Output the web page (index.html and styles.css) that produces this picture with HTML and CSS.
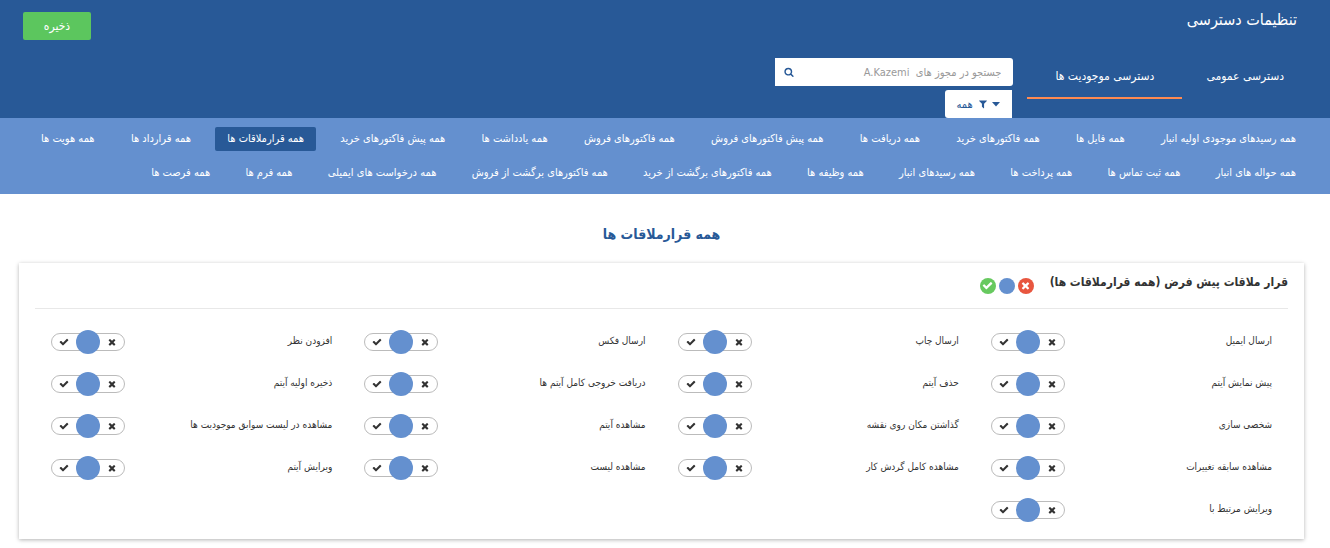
FILE: index.html
```html
<!DOCTYPE html>
<html lang="fa" dir="rtl">
<head>
<meta charset="utf-8">
<title>تنظیمات دسترسی</title>
<link rel="stylesheet" href="styles.css">
</head>
<body>
<svg class="sprite" aria-hidden="true">
  <symbol id="check" viewBox="0 0 1792 1792"><path d="M1671 566q0 40-28 68l-724 724-136 136q-28 28-68 28t-68-28l-136-136-362-362q-28-28-28-68t28-68l136-136q28-28 68-28t68 28l294 295 656-657q28-28 68-28t68 28l136 136q28 28 28 68z"/></symbol>
  <symbol id="times" viewBox="0 0 1792 1792"><path d="M1490 1322q0 40-28 68l-136 136q-28 28-68 28t-68-28l-294-294-294 294q-28 28-68 28t-68-28l-136-136q-28-28-28-68t28-68l294-294-294-294q-28-28-28-68t28-68l136-136q28-28 68-28t68 28l294 294 294-294q28-28 68-28t68 28l136 136q28 28 28 68t-28 68l-294 294 294 294q28 28 28 68z"/></symbol>
  <symbol id="search" viewBox="0 0 1792 1792"><path d="M1216 832q0-185-131.500-316.500t-316.500-131.500-316.500 131.500-131.500 316.500 131.500 316.500 316.500 131.500 316.500-131.500 131.500-316.500zm512 832q0 52-38 90t-90 38q-54 0-90-38l-343-342q-179 124-399 124-143 0-273.500-55.500t-225-150-150-225-55.500-273.500 55.500-273.500 150-225 225-150 273.500-55.500 273.500 55.500 225 150 150 225 55.500 273.500q0 220-124 399l343 343q37 37 37 90z"/></symbol>
  <symbol id="filter" viewBox="0 0 1792 1792"><path d="M1595 295q17 41-14 70l-493 493v742q0 42-39 59-13 5-25 5-27 0-45-19l-256-256q-19-19-19-45v-486l-493-493q-31-29-14-70 17-39 59-39h1280q42 0 59 39z"/></symbol>
  <symbol id="caret" viewBox="0 0 8 5"><path d="M0 0h8L4 4.500z"/></symbol>
</svg>

<header class="top">
  <div class="title-row">
    <h1 class="page-title">تنظیمات دسترسی</h1>
    <button class="save" type="button">ذخیره</button>
  </div>
  <div class="tools-row">
    <nav class="tabs">
      <a class="tab" href="#general">دسترسی عمومی</a>
      <a class="tab tab-active" href="#entities">دسترسی موجودیت ها</a>
    </nav>
    <div class="tools">
      <div class="search">
        <input class="search-input" type="text" aria-label="جستجو" placeholder="جستجو در مجوز های  A.Kazemi">
        <button class="search-button" type="button" aria-label="جستجو"><svg class="icon-search"><use href="#search"/></svg></button>
      </div>
      <div class="filter">
        <svg class="icon-caret"><use href="#caret"/></svg>
        <svg class="icon-filter"><use href="#filter"/></svg>
        <select class="filter-select" aria-label="فیلتر"><option>همه</option></select>
      </div>
    </div>
  </div>
</header>

<nav class="entities">
  <div class="entity-row">
    <a class="entity" href="#e1">همه رسیدهای موجودی اولیه انبار</a>
    <a class="entity" href="#e2">همه فایل ها</a>
    <a class="entity" href="#e3">همه فاکتورهای خرید</a>
    <a class="entity" href="#e4">همه دریافت ها</a>
    <a class="entity" href="#e5">همه پیش فاکتورهای فروش</a>
    <a class="entity" href="#e6">همه فاکتورهای فروش</a>
    <a class="entity" href="#e7">همه یادداشت ها</a>
    <a class="entity" href="#e8">همه پیش فاکتورهای خرید</a>
    <a class="entity entity-active" href="#e9">همه قرارملاقات ها</a>
    <a class="entity" href="#e10">همه قرارداد ها</a>
    <a class="entity" href="#e11">همه هویت ها</a>
  </div>
  <div class="entity-row entity-row-short">
    <a class="entity" href="#e12">همه حواله های انبار</a>
    <a class="entity" href="#e13">همه ثبت تماس ها</a>
    <a class="entity" href="#e14">همه پرداخت ها</a>
    <a class="entity" href="#e15">همه رسیدهای انبار</a>
    <a class="entity" href="#e16">همه وظیفه ها</a>
    <a class="entity" href="#e17">همه فاکتورهای برگشت از خرید</a>
    <a class="entity" href="#e18">همه فاکتورهای برگشت از فروش</a>
    <a class="entity" href="#e19">همه درخواست های ایمیلی</a>
    <a class="entity" href="#e20">همه فرم ها</a>
    <a class="entity" href="#e21">همه فرصت ها</a>
  </div>
</nav>

<main class="content">
  <h2 class="section-title">همه قرارملاقات ها</h2>
  <section class="card">
    <div class="card-head">
      <h3 class="card-title">قرار ملاقات پیش فرض (همه قرارملاقات ها)</h3>
      <div class="bulk">
        <button class="dot dot-deny" type="button" aria-label="عدم دسترسی"><svg class="icon-dot"><use href="#times"/></svg></button>
        <button class="dot" type="button" aria-label="پیش فرض"></button>
        <button class="dot dot-allow" type="button" aria-label="دسترسی"><svg class="icon-dot"><use href="#check"/></svg></button>
      </div>
    </div>
    <div class="permissions" id="permissions"></div>
  </section>
</main>
<script src="script.js"></script>
</body>
</html>
```
FILE: styles.css
```css
* { box-sizing: border-box; }

body {
  margin: 0;
  background: #fff;
  color: #333;
  font-family: "DejaVu Sans Condensed", "DejaVu Sans", sans-serif;
  font-size: 10px;
}

button, input, select { font-family: inherit; margin: 0; border: 0; }
a { color: inherit; text-decoration: none; }
h1, h2, h3 { margin: 0; }
svg { display: block; fill: currentColor; }
.sprite { display: none; }

.top { background: #285997; color: #fff; }

.title-row {
  display: flex;
  justify-content: space-between;
  align-items: flex-start;
  height: 56px;
  padding: 12px 33px 0 23px;
}
.page-title { font-size: 16px; line-height: 16px; font-weight: 400; }
.save {
  width: 68px;
  height: 28px;
  border-radius: 2px;
  background: #5cc65e;
  color: #fff;
  font-size: 12px;
}

.tools-row { display: flex; align-items: flex-start; gap: 14px; padding-right: 22px; }
.tabs { display: flex; }
.tab {
  padding: 0 24px;
  border-bottom: 2px solid transparent;
  font-size: 12px;
  line-height: 41px;
  text-align: center;
  white-space: nowrap;
}
.tab-active { min-width: 155px; border-color: #ff8a50; }

.tools { display: flex; flex-direction: column; gap: 4px; padding-top: 2px; }
.search {
  display: flex;
  width: 238px;
  height: 28px;
  overflow: hidden;
  border-radius: 0 3px 3px 0;
  background: #fff;
}
.search-input { flex: 1; min-width: 0; padding: 0 12px 0 0; background: none; font-size: 11px; }
.search-input::placeholder { color: #999; white-space: pre; }
.search-button { width: 28px; padding: 0 9px; background: none; color: #285997; }
.icon-search { width: 10px; height: 10px; }
.filter {
  display: flex;
  align-items: center;
  gap: 4px;
  width: 67px;
  height: 28px;
  margin-right: 1px;
  padding: 0 12px 0 11px;
  border-radius: 3px 0 0 3px;
  background: #fff;
  color: #285997;
}
.icon-caret { width: 8px; height: 5px; flex: none; }
.icon-filter { width: 10px; height: 10px; flex: none; }
.filter-select {
  flex: 1;
  min-width: 0;
  padding: 0;
  appearance: none;
  background: none;
  color: #285997;
  font-size: 11px;
  text-align: left;
  text-align-last: left;
}

.entities {
  display: flex;
  flex-direction: column;
  gap: 10px;
  padding: 9px 22px 9px 29px;
  background: #6490cf;
  color: #fff;
}
.entity-row { display: flex; justify-content: space-between; }
.entity-row-short { padding-left: 110px; }
.entity { padding: 0 12px; border-radius: 2px; font-size: 11px; line-height: 24px; white-space: nowrap; }
.entity-active { background: #285997; }

.content { padding: 28px 26px 9px 19px; }
.section-title {
  padding-bottom: 17px;
  color: #285997;
  font-size: 14px;
  line-height: 24px;
  text-align: center;
}
.card {
  padding: 0 16px 8px;
  background: #fff;
  box-shadow: 0 1px 4px rgba(0, 0, 0, .3);
}
.card-head {
  display: flex;
  align-items: center;
  gap: 16px;
  height: 46px;
  border-bottom: 1px solid #e8e8e8;
}
.card-title { padding-bottom: 8px; font-size: 12px; line-height: 20px; }
.bulk { display: flex; gap: 3px; }
.dot {
  display: grid;
  place-items: center;
  width: 16px;
  height: 16px;
  padding: 0;
  border-radius: 50%;
  background: #6490cf;
  color: #fff;
}
.dot-deny { background: #e8563f; }
.dot-allow { background: #67c95f; }
.icon-dot { width: 11px; height: 11px; }

.permissions { display: grid; grid-template-columns: repeat(4, 1fr); padding-top: 12px; }
.permission {
  display: flex;
  justify-content: space-between;
  align-items: center;
  height: 42px;
  padding: 0 16px;
}
.permission-label { padding-bottom: 4px; font-size: 10px; white-space: nowrap; }
.switch {
  display: grid;
  grid-template-columns: 24px 1fr 24px;
  grid-template-rows: 16px;
  place-items: center;
  width: 74px;
  height: 18px;
  border: 1px solid #bbb;
  border-radius: 9px;
}
.switch-icon { width: 10px; height: 10px; grid-row: 1; }
.switch-times { grid-column: 1; }
.switch-check { grid-column: 3; }
.switch-range {
  grid-area: 1 / 1 / 2 / 4;
  width: 100%;
  height: 24px;
  margin: 0;
  appearance: none;
  background: none;
}
.switch-range::-webkit-slider-thumb {
  width: 24px;
  height: 24px;
  appearance: none;
  border-radius: 50%;
  background: #6490cf;
}
```
FILE: script.js
```js
const permissions = [
  "ارسال ایمیل", "ارسال چاپ", "ارسال فکس", "افزودن نظر",
  "پیش نمایش آیتم", "حذف آیتم", "دریافت خروجی کامل آیتم ها", "ذخیره اولیه آیتم",
  "شخصی سازی", "گذاشتن مکان روی نقشه", "مشاهده آیتم", "مشاهده در لیست سوابق موجودیت ها",
  "مشاهده سابقه تغییرات", "مشاهده کامل گردش کار", "مشاهده لیست", "ویرایش آیتم",
  "ویرایش مرتبط با"
];

document.getElementById("permissions").innerHTML = permissions.map((name, i) => `
  <div class="permission">
    <label class="permission-label" for="p${i}">${name}</label>
    <div class="switch">
      <svg class="switch-icon switch-times"><use href="#times"/></svg>
      <svg class="switch-icon switch-check"><use href="#check"/></svg>
      <input class="switch-range" id="p${i}" type="range" min="0" max="2" step="1" value="1">
    </div>
  </div>`).join("");
```
